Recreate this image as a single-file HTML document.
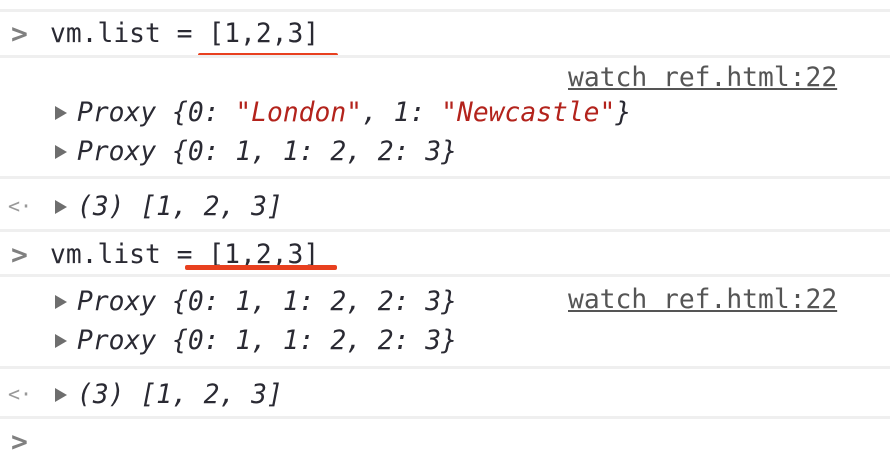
<!DOCTYPE html>
<html><head><style>
body{margin:0;width:890px;height:460px;background:#fff;position:relative;overflow:hidden;font-family:"DejaVu Sans Mono","Liberation Mono",monospace;font-size:26.3px;color:#2a2a33}
.t{position:absolute;white-space:pre;line-height:40px;height:40px}
.sep{position:absolute;left:0;width:890px;height:3px;background:#efefef}
.i{font-style:italic}
.s{color:#b3231c}
.g{color:#999}
.tri{position:absolute;width:0;height:0;border-top:7px solid transparent;border-bottom:7px solid transparent;border-left:12px solid #6e6e6e}
.red{position:absolute;height:5px;background:#e8401f;border-radius:2px}
.p{color:#808080;font-size:28px;font-weight:600}
</style></head><body>
<div class="sep" style="top:9px"></div>
<div class="t p" style="left:11px;top:14px">&gt;</div>
<div class="t" style="left:50px;top:14px">vm.list = [1,2,3]</div>
<div class="red" style="left:198px;top:53px;width:140px"></div>
<div class="sep" style="top:55px"></div>
<div class="t" style="left:568px;top:58px;text-decoration:underline;color:#555">watch ref.html:22</div>
<div class="tri" style="left:55px;top:106px"></div>
<div class="t i" style="left:77px;top:93px">Proxy {0: <span class="s">"London"</span>, 1: <span class="s">"Newcastle"</span>}</div>
<div class="tri" style="left:55px;top:145px"></div>
<div class="t i" style="left:77px;top:132px">Proxy {0: 1, 1: 2, 2: 3}</div>
<div class="sep" style="top:176px"></div>
<div class="t g" style="left:8px;top:186px;font-size:20px">&lt;·</div>
<div class="tri" style="left:55px;top:200px"></div>
<div class="t i" style="left:77px;top:187px">(3) [1, 2, 3]</div>
<div class="sep" style="top:229px"></div>
<div class="t p" style="left:11px;top:235px">&gt;</div>
<div class="t" style="left:50px;top:235px">vm.list = [1,2,3]</div>
<div class="red" style="left:185px;top:265px;width:152px"></div>
<div class="sep" style="top:274px"></div>
<div class="t" style="left:568px;top:280px;text-decoration:underline;color:#555">watch ref.html:22</div>
<div class="tri" style="left:55px;top:295px"></div>
<div class="t i" style="left:77px;top:282px">Proxy {0: 1, 1: 2, 2: 3}</div>
<div class="tri" style="left:55px;top:334px"></div>
<div class="t i" style="left:77px;top:321px">Proxy {0: 1, 1: 2, 2: 3}</div>
<div class="sep" style="top:366px"></div>
<div class="t g" style="left:8px;top:374px;font-size:20px">&lt;·</div>
<div class="tri" style="left:55px;top:388px"></div>
<div class="t i" style="left:77px;top:375px">(3) [1, 2, 3]</div>
<div class="sep" style="top:416px"></div>
<div class="t p" style="left:11px;top:422px">&gt;</div>
</body></html>
